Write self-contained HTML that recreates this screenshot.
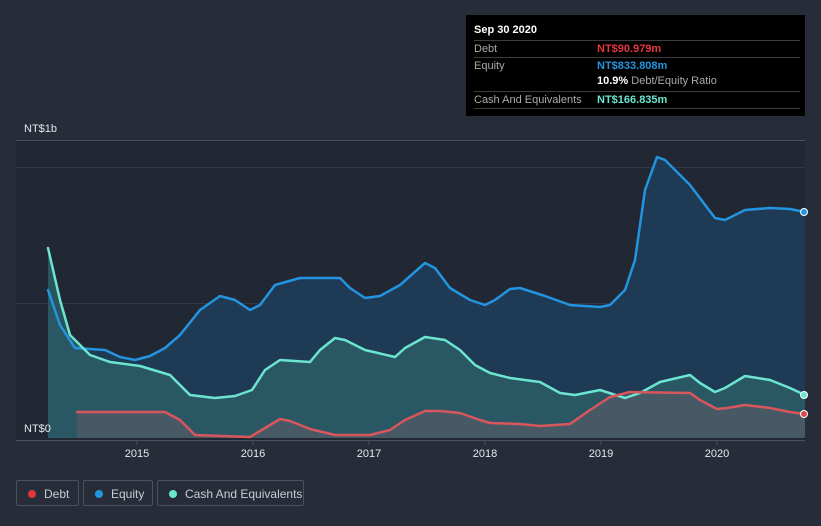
<!DOCTYPE html>
<html><head><meta charset="utf-8"><style>
body{margin:0;width:821px;height:526px;background:#262c38;font-family:"Liberation Sans",sans-serif;overflow:hidden;position:relative}
.tt{position:absolute;left:466px;top:15px;width:339px;height:101px;background:#000;color:#fff;font-size:11px}
.tt .h{position:absolute;left:8px;top:9px;font-weight:bold}
.row{position:absolute;left:8px;width:326px;border-top:1px solid #3c3c3c;height:17px}
.row span{position:absolute;top:2px}
.lg{position:absolute;top:480px;height:26px;border:1px solid #4a505c;border-radius:2px;color:#c9ccd2;font-size:12px;line-height:26px;box-sizing:border-box}
.lg i{position:absolute;left:11px;top:9px;width:8px;height:8px;border-radius:50%}
.lg b{font-weight:normal;position:absolute;left:27px}
</style></head><body>
<svg width="821" height="526" style="position:absolute;left:0;top:0">
<rect x="16" y="140" width="789" height="300" fill="#212733"/>
<line x1="16" y1="140.5" x2="805" y2="140.5" stroke="#4b515c"/>
<line x1="16" y1="167.5" x2="805" y2="167.5" stroke="#323845"/>
<line x1="16" y1="303.5" x2="805" y2="303.5" stroke="#323845"/>
<polygon fill="#1f3e5a" opacity="0.85" points="48,438 48,290 60,325 75,348 105,350 120,357 135,360 150,356 165,348 180,335 200,310 220,296 235,300 250,310 260,305 275,285 300,278 340,278 350,288 365,298 380,296 400,285 425,263 435,268 450,288 470,300 485,305 495,300 510,289 520,288 545,296 570,305 600,307 610,305 625,290 635,260 645,190 657,157 665,160 690,185 715,218 725,220 745,210 770,208 790,209 805,212 805,438"/>
<polygon fill="#2c6068" opacity="0.8" points="48,438 48,248 60,300 70,335 90,355 110,362 140,366 170,375 190,395 215,398 235,396 252,390 265,370 280,360 310,362 320,350 335,338 345,340 365,350 395,357 405,348 425,337 445,340 460,350 475,365 490,373 510,378 540,382 560,393 575,395 600,390 625,398 640,393 660,382 690,375 700,383 715,392 725,388 745,376 770,380 790,388 805,395 805,438"/>
<polygon fill="#5a5a66" opacity="0.6" points="77,438 77,412 165,412 180,420 195,435 250,437 265,428 280,419 290,421 310,429 335,435 370,435 390,430 405,420 425,411 440,411 460,413 480,420 490,423 520,424 540,426 570,424 590,410 610,397 630,392 690,393 700,400 717,409 727,408 745,405 770,408 790,412 805,414 805,438"/>
<g fill="none" stroke-width="2.5" stroke-linejoin="round" stroke-linecap="round">
<polyline stroke="#2394df" points="48,290 60,325 75,348 105,350 120,357 135,360 150,356 165,348 180,335 200,310 220,296 235,300 250,310 260,305 275,285 300,278 340,278 350,288 365,298 380,296 400,285 425,263 435,268 450,288 470,300 485,305 495,300 510,289 520,288 545,296 570,305 600,307 610,305 625,290 635,260 645,190 657,157 665,160 690,185 715,218 725,220 745,210 770,208 790,209 805,212"/>
<polyline stroke="#6ce5d0" points="48,248 60,300 70,335 90,355 110,362 140,366 170,375 190,395 215,398 235,396 252,390 265,370 280,360 310,362 320,350 335,338 345,340 365,350 395,357 405,348 425,337 445,340 460,350 475,365 490,373 510,378 540,382 560,393 575,395 600,390 625,398 640,393 660,382 690,375 700,383 715,392 725,388 745,376 770,380 790,388 805,395"/>
<polyline stroke="#d9565c" points="77,412 165,412 180,420 195,435 250,437 265,428 280,419 290,421 310,429 335,435 370,435 390,430 405,420 425,411 440,411 460,413 480,420 490,423 520,424 540,426 570,424 590,410 610,397 630,392 690,393 700,400 717,409 727,408 745,405 770,408 790,412 805,414"/>
</g>
<circle cx="804" cy="212" r="3.5" fill="#2394df" stroke="#fff" stroke-width="1"/>
<circle cx="804" cy="395" r="3.5" fill="#6ce5d0" stroke="#fff" stroke-width="1"/>
<circle cx="804" cy="414" r="3.5" fill="#e0474c" stroke="#fff" stroke-width="1"/>
<line x1="16" y1="440.5" x2="805" y2="440.5" stroke="#4b515c"/>
<g stroke="#4b515c"><line x1="137" y1="440" x2="137" y2="445"/><line x1="253" y1="440" x2="253" y2="445"/><line x1="369" y1="440" x2="369" y2="445"/><line x1="485" y1="440" x2="485" y2="445"/><line x1="601" y1="440" x2="601" y2="445"/><line x1="717" y1="440" x2="717" y2="445"/></g>
<g fill="#e6e8ec" font-size="11" font-family="Liberation Sans" text-anchor="middle">
<text x="137" y="457">2015</text><text x="253" y="457">2016</text><text x="369" y="457">2017</text><text x="485" y="457">2018</text><text x="601" y="457">2019</text><text x="717" y="457">2020</text>
</g>
<text x="24" y="132" fill="#e6e8ec" font-size="11">NT$1b</text>
<text x="24" y="432" fill="#e6e8ec" font-size="11">NT$0</text>
</svg>
<div class="tt">
<div class="h">Sep 30 2020</div>
<div class="row" style="top:25px"><span style="color:#aaa">Debt</span><span style="left:123px;color:#e5383e;font-weight:bold">NT$90.979m</span></div>
<div class="row" style="top:42px"><span style="color:#aaa">Equity</span><span style="left:123px;color:#2394df;font-weight:bold">NT$833.808m</span></div>
<div style="position:absolute;left:131px;top:60px"><b>10.9%</b> <span style="color:#aaa">Debt/Equity Ratio</span></div>
<div class="row" style="top:76px;height:16px;border-bottom:1px solid #3c3c3c"><span style="color:#aaa">Cash And Equivalents</span><span style="left:123px;color:#6ce5d0;font-weight:bold">NT$166.835m</span></div>
</div>
<div class="lg" style="left:16px;width:63px"><i style="background:#e5383e"></i><b>Debt</b></div>
<div class="lg" style="left:83px;width:70px"><i style="background:#2394df"></i><b>Equity</b></div>
<div class="lg" style="left:157px;width:147px"><i style="background:#6ce5d0"></i><b>Cash And Equivalents</b></div>
</body></html>
